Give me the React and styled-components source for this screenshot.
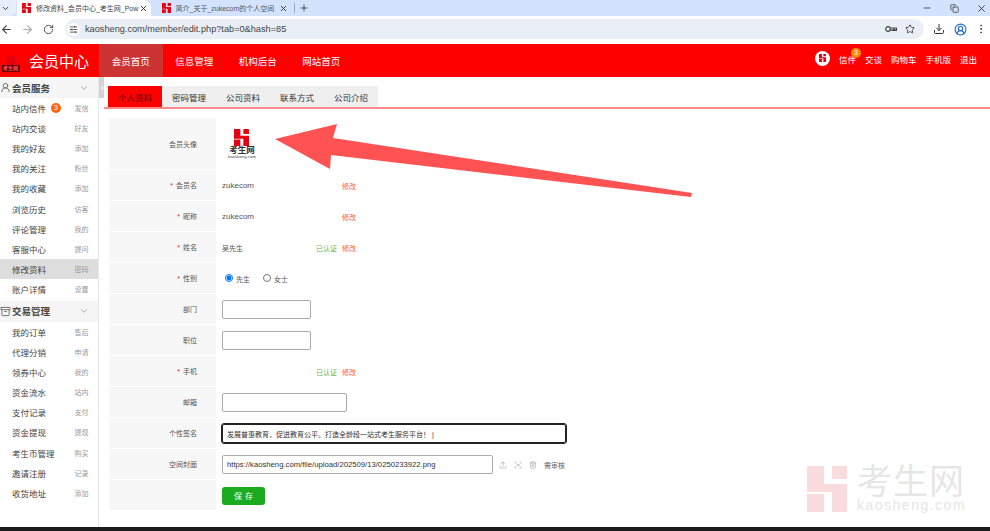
import React from "react";
import styled, { createGlobalStyle } from "styled-components";
import {
  ArrowLeft,
  ArrowRight,
  RotateCw,
  Star,
  Download,
  CircleUserRound,
  EllipsisVertical,
  Minus,
  Copy,
  X,
  Plus,
  ChevronDown,
  Upload,
  Focus,
  Trash2,
  UserRound,
  Archive,
  SlidersHorizontal,
} from "lucide-react";

const FONT = `"Liberation Sans", "Noto Sans CJK SC", sans-serif`;

const GlobalStyle = createGlobalStyle`
  html, body { margin: 0; padding: 0; background: #fff; overflow: hidden; }
  body { font-family: ${FONT}; width: 990px; height: 531px; position: relative; }
  * { box-sizing: border-box; }
`;

const serviceMenu = [
  ["站内信件", "发信", 3],
  ["站内交谈", "好友"],
  ["我的好友", "添加"],
  ["我的关注", "粉丝"],
  ["我的收藏", "添加"],
  ["浏览历史", "访客"],
  ["评论管理", "我的"],
  ["客服中心", "提问"],
  ["修改资料", "密码", 0, true],
  ["账户详情", "设置"],
];

const tradeMenu = [
  ["我的订单", "售后"],
  ["代理分销", "申请"],
  ["领券中心", "我的"],
  ["资金流水", "站内"],
  ["支付记录", "支付"],
  ["资金提现", "提现"],
  ["考生币管理", "购买"],
  ["邀请注册", "记录"],
  ["收货地址", "添加"],
];

function Logo({ size = 20, color = "#e60012" }) {
  return (
    <svg width={size} height={size * 1.15} viewBox="0 0 40 46" fill={color}>
      <path d="M1 0h15a1 1 0 0 1 1 1v17h23v27a1 1 0 0 1-1 1H26a1 1 0 0 1-1-1V26H0V1a1 1 0 0 1 1-1z" />
      <path d="M25 0h14a1 1 0 0 1 1 1v12H26a1 1 0 0 1-1-1z" />
      <path d="M0 28h17v17a1 1 0 0 1-1 1H1a1 1 0 0 1-1-1z" />
    </svg>
  );
}

function KeyGlyph() {
  return (
    <svg width="12" height="8" viewBox="0 0 12 8" fill="none" stroke="#444" strokeWidth="1.2">
      <circle cx="3" cy="4" r="2.3" />
      <path d="M5.5 3h6v2.4H9.6V4.4H8.4v1H7V5H5.5" />
    </svg>
  );
}

export default function App() {
  return (
    <>
      <GlobalStyle />
      <Page>
        <TabStrip>
          <TabMenu>
            <ChevronDown size={9} strokeWidth={2.5} />
          </TabMenu>
          <BrowserTab $active>
            <Logo size={9} />
            <TabTitle $active>修改资料_会员中心_考生网_Pow</TabTitle>
            <TabClose>
              <X size={9} strokeWidth={2.5} />
            </TabClose>
          </BrowserTab>
          <BrowserTab>
            <Logo size={9} />
            <TabTitle>简介_关于_zukecom的个人空间</TabTitle>
            <TabClose>
              <X size={9} strokeWidth={2.5} />
            </TabClose>
          </BrowserTab>
          <TabDivider />
          <NewTab>
            <Plus size={10} strokeWidth={2} />
          </NewTab>
          <WindowControls>
            <Minus size={10} />
            <Copy size={9} />
            <X size={11} />
          </WindowControls>
        </TabStrip>

        <Toolbar>
          <NavIcon>
            <ArrowLeft size={13} />
          </NavIcon>
          <NavIcon $muted>
            <ArrowRight size={13} />
          </NavIcon>
          <NavIcon>
            <RotateCw size={11} />
          </NavIcon>
          <AddressBar>
            <SiteIcon>
              <SlidersHorizontal size={9} />
            </SiteIcon>
            <Url>kaosheng.com/member/edit.php?tab=0&amp;hash=85</Url>
            <KeyGlyph />
            <Star size={10} color="#333" />
          </AddressBar>
          <ToolIcons>
            <Download size={12} color="#333" />
            <CircleUserRound size={13} color="#1a66d0" />
            <EllipsisVertical size={12} color="#444" />
          </ToolIcons>
        </Toolbar>

        <TopBar>
          <Brand>
            <BrandMark>
              <Logo size={8} color="#d80010" />
              <BrandMarkText>考生网</BrandMarkText>
            </BrandMark>
            <BrandTitle>会员中心</BrandTitle>
          </Brand>
          <MainNav>
            <MainNavItem $active>会员首页</MainNavItem>
            <MainNavItem>信息管理</MainNavItem>
            <MainNavItem>机构后台</MainNavItem>
            <MainNavItem>网站首页</MainNavItem>
          </MainNav>
          <UserNav>
            <AvatarDot>
              <Logo size={7} />
            </AvatarDot>
            <UserLink>
              信件
              <MailBadge>3</MailBadge>
            </UserLink>
            <UserLink>交谈</UserLink>
            <UserLink>购物车</UserLink>
            <UserLink>手机版</UserLink>
            <UserLink>退出</UserLink>
          </UserNav>
        </TopBar>

        <Body>
          <Sidebar>
            <MenuHead>
              <MenuHeadTitle>
                <UserRound size={11} color="#666" />
                会员服务
              </MenuHeadTitle>
              <ChevronDown size={10} color="#999" />
            </MenuHead>
            {serviceMenu.map(([name, extra, badge, active]) => (
              <MenuRow key={name} $active={active}>
                <MenuName>
                  {name}
                  {badge ? <MenuBadge>{badge}</MenuBadge> : null}
                </MenuName>
                <MenuExtra>{extra}</MenuExtra>
              </MenuRow>
            ))}
            <MenuHead $second>
              <MenuHeadTitle>
                <Archive size={11} color="#666" />
                交易管理
              </MenuHeadTitle>
              <ChevronDown size={10} color="#999" />
            </MenuHead>
            {tradeMenu.map(([name, extra]) => (
              <MenuRow key={name}>
                <MenuName>{name}</MenuName>
                <MenuExtra>{extra}</MenuExtra>
              </MenuRow>
            ))}
          </Sidebar>
          <Collapse>
            <CollapseHandle />
          </Collapse>

          <Content>
            <Tabs>
              <TabItem $active>个人资料</TabItem>
              <TabItem>密码管理</TabItem>
              <TabItem>公司资料</TabItem>
              <TabItem>联系方式</TabItem>
              <TabItem>公司介绍</TabItem>
            </Tabs>

            <Form>
              <FormRow $tall>
                <Label>会员头像</Label>
                <Value>
                  <AvatarBox>
                    <Logo size={15} />
                    <AvatarName>考生网</AvatarName>
                    <AvatarSite>kaosheng.com</AvatarSite>
                  </AvatarBox>
                </Value>
              </FormRow>
              <FormRow>
                <Label $required>会员名</Label>
                <Value>
                  <Plain $latin>zukecom</Plain>
                  <Status />
                  <Edit>修改</Edit>
                </Value>
              </FormRow>
              <FormRow>
                <Label $required>昵称</Label>
                <Value>
                  <Plain $latin>zukecom</Plain>
                  <Status />
                  <Edit>修改</Edit>
                </Value>
              </FormRow>
              <FormRow>
                <Label $required>姓名</Label>
                <Value>
                  <Plain>吴先生</Plain>
                  <Status>已认证</Status>
                  <Edit>修改</Edit>
                </Value>
              </FormRow>
              <FormRow>
                <Label $required>性别</Label>
                <Value>
                  <RadioLabel>
                    <Radio type="radio" name="gender" defaultChecked />
                    先生
                  </RadioLabel>
                  <RadioLabel>
                    <Radio type="radio" name="gender" />
                    女士
                  </RadioLabel>
                </Value>
              </FormRow>
              <FormRow>
                <Label>部门</Label>
                <Value>
                  <Input $w={89} />
                </Value>
              </FormRow>
              <FormRow>
                <Label>职位</Label>
                <Value>
                  <Input $w={89} />
                </Value>
              </FormRow>
              <FormRow>
                <Label $required>手机</Label>
                <Value>
                  <Plain />
                  <Status>已认证</Status>
                  <Edit>修改</Edit>
                </Value>
              </FormRow>
              <FormRow>
                <Label>邮箱</Label>
                <Value>
                  <Input $w={125} />
                </Value>
              </FormRow>
              <FormRow>
                <Label>个性签名</Label>
                <Value>
                  <Input
                    $w={344}
                    $focus
                    readOnly
                    value="发展普惠教育，促进教育公平。打造全龄段一站式考生服务平台！ |"
                  />
                </Value>
              </FormRow>
              <FormRow>
                <Label>空间封面</Label>
                <Value>
                  <Input
                    $w={271}
                    readOnly
                    value="https://kaosheng.com/file/upload/202509/13/0250233922.png"
                  />
                  <CoverTools>
                    <Upload size={8} />
                    <Focus size={8} />
                    <Trash2 size={8} />
                    <Review>需审核</Review>
                  </CoverTools>
                </Value>
              </FormRow>
              <FormRow>
                <Label />
                <Value>
                  <SaveButton>保 存</SaveButton>
                </Value>
              </FormRow>
            </Form>
          </Content>
        </Body>
        <BottomEdge />

        <Watermark>
          <Logo size={40} color="#fbdcde" />
          <WatermarkText>
            <WatermarkName>考生网</WatermarkName>
            <WatermarkSite>kaosheng.com</WatermarkSite>
          </WatermarkText>
        </Watermark>

        <ArrowOverlay width="990" height="531" viewBox="0 0 990 531">
          <path
            d="M275 139 L337 124 L333 138 L692 193 L691 197 L331 155 L330 169 Z"
            fill="#ff5252"
          />
        </ArrowOverlay>
      </Page>
    </>
  );
}

const Page = styled.div`
  width: 990px;
  height: 531px;
  display: flex;
  flex-direction: column;
  position: relative;
  overflow: hidden;
`;

const TabStrip = styled.div`
  height: 16px;
  background: #d3e3fd;
  display: flex;
  align-items: flex-end;
  color: #333;
  flex-shrink: 0;
`;

const TabMenu = styled.div`
  width: 16px;
  height: 16px;
  padding-left: 1px;
  display: flex;
  align-items: center;
  background: #e8eef9;
  border-bottom-right-radius: 6px;
`;

const BrowserTab = styled.div`
  width: ${(p) => (p.$active ? "134px" : "139px")};
  height: 16px;
  padding-left: ${(p) => (p.$active ? "5px" : "7.5px")};
  margin-left: ${(p) => (p.$active ? "1px" : "3px")};
  display: flex;
  align-items: center;
  gap: 5px;
  background: ${(p) => (p.$active ? "#fff" : "transparent")};
  border-radius: ${(p) => (p.$active ? "0 8px 0 0" : "0")};
`;

const TabTitle = styled.span`
  flex: none;
  width: 103px;
  white-space: nowrap;
  font-size: 7px;
  color: ${(p) => (p.$active ? "#444" : "#555")};
`;

const TabClose = styled.span`
  margin-left: -5px;
  display: flex;
`;

const TabDivider = styled.div`
  width: 1px;
  height: 10px;
  margin: 0 0 3px 1px;
  background: #98a6bd;
`;

const NewTab = styled.div`
  margin: 0 0 3px 4px;
  height: 10px;
  display: flex;
`;

const WindowControls = styled.div`
  margin-left: auto;
  width: 68px;
  height: 16px;
  padding-right: 3px;
  display: flex;
  align-items: center;
  justify-content: space-between;
`;

const Toolbar = styled.div`
  height: 28px;
  background: #fff;
  display: flex;
  align-items: center;
  padding: 0 0 2px 0;
  flex-shrink: 0;
`;

const NavIcon = styled.div`
  width: 21px;
  display: flex;
  justify-content: center;
  color: ${(p) => (p.$muted ? "#aaa" : "#444")};
  &:first-child {
    margin-left: -4.5px;
  }
`;

const AddressBar = styled.div`
  width: 859px;
  height: 20px;
  margin-left: 6.5px;
  padding: 0 9px 0 1.5px;
  background: #e9eef7;
  border-radius: 10px;
  display: flex;
  align-items: center;
  gap: 8px;
`;

const SiteIcon = styled.div`
  width: 13px;
  height: 13px;
  border-radius: 50%;
  background: #fff;
  color: #333;
  display: flex;
  align-items: center;
  justify-content: center;
`;

const Url = styled.div`
  flex: 1;
  margin-left: -2.5px;
  font-size: 9.2px;
  color: #444;
`;

const ToolIcons = styled.div`
  flex: 1;
  padding: 0 3px 0 9px;
  display: flex;
  align-items: center;
  justify-content: space-between;
`;

const TopBar = styled.div`
  height: 33px;
  background: #ff0000;
  display: flex;
  align-items: stretch;
  flex-shrink: 0;
`;

const Brand = styled.div`
  width: 99px;
  display: flex;
  align-items: center;
  padding-left: 1px;
`;

const BrandMark = styled.div`
  width: 19px;
  padding-top: 7px;
  display: flex;
  flex-direction: column;
  align-items: center;
`;

const BrandMarkText = styled.span`
  width: 18px;
  font-size: 5px;
  line-height: 7px;
  text-align: center;
  background: #6a0008;
  color: #ff5050;
  font-weight: 700;
`;

const BrandTitle = styled.div`
  margin-left: 9px;
  font-size: 15px;
  color: #fff;
  white-space: nowrap;
`;

const MainNav = styled.div`
  display: flex;
`;

const MainNavItem = styled.div`
  width: 63.5px;
  display: flex;
  align-items: center;
  justify-content: center;
  font-size: 9.5px;
  color: #fff;
  background: ${(p) => (p.$active ? "#cc3333" : "transparent")};
`;

const UserNav = styled.div`
  margin-left: auto;
  padding: 0 13px 4px 0;
  display: flex;
  align-items: center;
  gap: 9px;
`;

const AvatarDot = styled.div`
  width: 15px;
  height: 15px;
  border-radius: 50%;
  background: #fff;
  display: flex;
  align-items: center;
  justify-content: center;
`;

const UserLink = styled.div`
  position: relative;
  font-size: 8.5px;
  color: #fff;
`;

const MailBadge = styled.span`
  position: absolute;
  top: -5px;
  right: -5px;
  width: 10px;
  height: 10px;
  border-radius: 50%;
  background: #ff8a00;
  color: #ffe;
  font-size: 7px;
  line-height: 10px;
  text-align: center;
`;

const Body = styled.div`
  flex: 1;
  display: flex;
  min-height: 0;
`;

const Sidebar = styled.div`
  width: 99px;
  flex-shrink: 0;
  border-right: 1px solid #e8e8e8;
`;

const MenuHead = styled.div`
  height: 21px;
  margin-top: ${(p) => (p.$second ? "2px" : "0")};
  padding: 0 9px 0 0;
  background: #f5f5f5;
  display: flex;
  align-items: center;
  justify-content: space-between;
`;

const MenuHeadTitle = styled.div`
  display: flex;
  align-items: center;
  gap: 1px;
  font-size: 9.5px;
  font-weight: 700;
  color: #444;
`;

const MenuRow = styled.div`
  height: 20.1px;
  padding: 0 9.5px 0 12px;
  display: flex;
  align-items: center;
  justify-content: space-between;
  background: ${(p) => (p.$active ? "#dddddd" : "transparent")};
`;

const MenuName = styled.div`
  display: flex;
  align-items: center;
  gap: 5px;
  font-size: 8.5px;
  color: #444;
`;

const MenuBadge = styled.span`
  width: 10px;
  height: 10px;
  border-radius: 50%;
  background: #f9640f;
  color: #fff;
  font-size: 7px;
  line-height: 10px;
  text-align: center;
`;

const MenuExtra = styled.div`
  font-size: 7px;
  color: #999;
`;

const Collapse = styled.div`
  width: 5px;
  flex-shrink: 0;
`;

const CollapseHandle = styled.div`
  height: 21px;
  background: #d4d4d4;
  display: flex;
  align-items: center;
  justify-content: center;
  &::before {
    content: "";
    border: 2px solid transparent;
    border-right: 2px solid #fff;
    border-left: 0;
  }
`;

const Content = styled.div`
  flex: 1;
  padding-top: 9px;
`;

const Tabs = styled.div`
  height: 23px;
  margin-right: -1px;
  border-bottom: 2px solid #ff8a8a;
  display: flex;
`;

const TabItem = styled.div`
  width: 54px;
  height: 21px;
  margin-left: ${(p) => (p.$active ? "4px" : "0")};
  background: ${(p) => (p.$active ? "#ff0000" : "#efefef")};
  color: ${(p) => (p.$active ? "#5a0000" : "#333")};
  font-size: 8.5px;
  display: flex;
  align-items: center;
  justify-content: center;
`;

const Form = styled.div`
  margin: 9px 0 0 5px;
  width: 470px;
`;

const FormRow = styled.div`
  height: ${(p) => (p.$tall ? "52px" : "31px")};
  display: flex;
`;

const Label = styled.div`
  width: 107px;
  flex-shrink: 0;
  padding-right: 19px;
  background: #f7f7f7;
  border-bottom: 1px solid #fff;
  display: flex;
  align-items: center;
  justify-content: flex-end;
  font-size: 7px;
  color: #555;
  &::before {
    content: ${(p) => (p.$required ? '"*"' : "none")};
    color: #e02020;
    margin-right: 3px;
  }
`;

const Value = styled.div`
  flex: 1;
  padding-left: 6px;
  display: flex;
  align-items: center;
  font-size: 7px;
  color: #555;
`;

const Plain = styled.span`
  width: 94px;
  font-size: ${(p) => (p.$latin ? "8px" : "7px")};
`;

const Status = styled.span`
  width: 26px;
  color: #5cb85c;
`;

const Edit = styled.span`
  color: #ff5a2c;
`;

const RadioLabel = styled.label`
  display: flex;
  align-items: center;
  margin-right: 10px;
  font-size: 7px;
  color: #555;
`;

const Radio = styled.input`
  width: 8px;
  height: 8px;
  margin: 0 3px 2px 3px;
`;

const Input = styled.input`
  width: ${(p) => p.$w}px;
  height: 19px;
  padding: 0 4px;
  border: ${(p) => (p.$focus ? "1px solid #222" : "1px solid #aaa")};
  border-radius: 2px;
  background: #fff;
  outline: ${(p) => (p.$focus ? "0.5px solid #222" : "none")};
  font-family: ${FONT};
  font-size: ${(p) => (p.$focus ? "7px" : "7.7px")};
  color: #333;
`;

const CoverTools = styled.div`
  margin-left: 6px;
  display: flex;
  align-items: center;
  gap: 7px;
  color: #aaa;
`;

const Review = styled.span`
  font-size: 7px;
  color: #666;
`;

const SaveButton = styled.button`
  width: 43px;
  height: 18px;
  padding: 0;
  border: 0;
  border-radius: 3px;
  background: #1aab1f;
  color: #fff;
  font-family: ${FONT};
  font-size: 8px;
  word-spacing: 1px;
`;

const AvatarBox = styled.div`
  padding-left: 6px;
  display: flex;
  flex-direction: column;
  align-items: center;
`;

const AvatarName = styled.span`
  font-size: 8.5px;
  line-height: 9px;
  font-weight: 700;
  color: #333;
`;

const AvatarSite = styled.span`
  font-size: 4.3px;
  line-height: 4px;
  color: #444;
`;

const BottomEdge = styled.div`
  height: 4px;
  background: #1b1b1b;
  flex-shrink: 0;
`;

const Watermark = styled.div`
  position: absolute;
  left: 807px;
  top: 466px;
  display: flex;
  gap: 10px;
`;

const WatermarkText = styled.div`
  display: flex;
  flex-direction: column;
`;

const WatermarkName = styled.span`
  font-size: 35px;
  line-height: 32px;
  height: 32px;
  letter-spacing: 1px;
  color: #e6e6e6;
`;

const WatermarkSite = styled.span`
  font-size: 14px;
  line-height: 14px;
  letter-spacing: 1.5px;
  color: #e6e6e6;
`;

const ArrowOverlay = styled.svg`
  position: absolute;
  left: 0;
  top: 0;
  pointer-events: none;
`;
